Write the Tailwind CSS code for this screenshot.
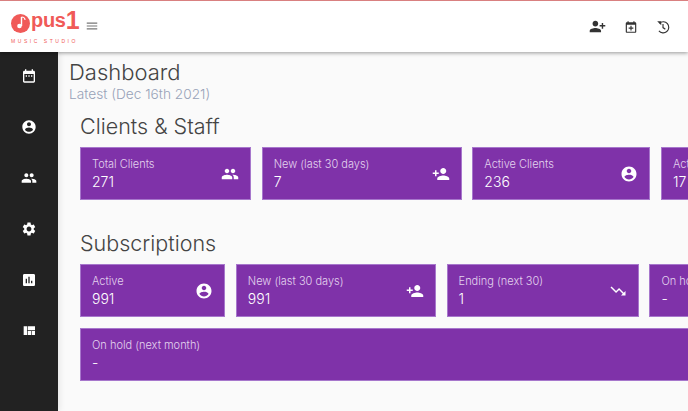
<!DOCTYPE html>
<html lang="en">
<head>
  <meta charset="UTF-8" />
  <title>Opus1 Dashboard</title>
  <script src="https://cdn.jsdelivr.net/npm/@tailwindcss/browser@4"></script>
</head>
<body class="h-[411px] w-[688px] overflow-hidden bg-[#fafafa] font-['Inter',sans-serif] text-[#444]">
  <!-- Header -->
  <header class="relative z-10 flex h-[52px] items-center border-t border-[#d98080] bg-white pl-[11px] pr-[18px] shadow-[0_1px_4px_rgba(0,0,0,0.4)]">
    <!-- logo -->
    <div class="-mt-[4px] flex w-[65px] flex-col text-[#f05a58]">
      <div class="flex h-[24px] items-end">
        <svg class="mb-[-4px] h-[21px] w-[20px] shrink-0" viewBox="0 0 20 21">
          <circle cx="9.5" cy="10.5" r="9.5" fill="#f05a58" />
          <path d="M10.5 4v9" stroke="#fff" stroke-width="1.4" fill="none" />
          <path d="M10.5 4c2.5 0 3.5 1 3.5 3" stroke="#fff" stroke-width="1.1" fill="none" />
          <circle cx="8.5" cy="13" r="2.3" fill="#fff" />
        </svg>
        <span class="font-['Liberation_Sans',sans-serif] text-[20px] leading-[19px] font-bold tracking-[-0.3px]">pus</span>
        <span class="font-['Liberation_Sans',sans-serif] text-[25px] leading-[19px] font-bold">1</span>
      </div>
      <span class="mt-[8px] font-['Liberation_Sans',sans-serif] text-[5px] leading-[6px] tracking-[2.55px] whitespace-nowrap">MUSIC STUDIO</span>
    </div>
    <svg class="mt-[-2px] ml-[9px] h-[14px] w-[14px]" viewBox="0 0 24 24" fill="#777"><path d="M3 18h18v-2H3v2zm0-5h18v-2H3v2zm0-7v2h18V6H3z" /></svg>
    <div class="ml-auto flex items-center gap-[18px]">
      <svg class="h-[17px] w-[17px]" viewBox="0 0 24 24" fill="#333"><path d="M15 12c2.21 0 4-1.79 4-4s-1.79-4-4-4-4 1.79-4 4 1.79 4 4 4zm-9-2V7H4v3H1v2h3v3h2v-3h3v-2H6zm9 4c-2.67 0-8 1.34-8 4v2h16v-2c0-2.66-5.33-4-8-4z" transform="matrix(-1 0 0 1 24 0)" /></svg>
      <svg class="h-[14px] w-[14px]" viewBox="0 0 24 24" fill="#333"><path d="M19 4h-1V2h-2v2H8V2H6v2H5c-1.1 0-2 .9-2 2v14c0 1.1.9 2 2 2h14c1.1 0 2-.9 2-2V6c0-1.1-.9-2-2-2zm0 16H5V8h14v12zm-8-2h2v-3h3v-2h-3v-3h-2v3H8v2h3v3z" /></svg>
      <svg class="h-[14px] w-[14px]" viewBox="0 0 24 24" fill="none" stroke="#333" stroke-width="2"><path d="M6 5.5A9.5 9.5 0 1 1 5 18.5" /><path d="M2 2h7v7z" fill="#333" stroke="none" /><path d="M12 7v6l4 3" /></svg>
    </div>
  </header>

  <div class="flex h-[359px]">
    <!-- Sidebar -->
    <nav class="flex w-[58px] shrink-0 flex-col items-center gap-[35px] bg-[#222] pt-[16px] text-white shadow-[2px_0_6px_rgba(0,0,0,0.08)]">
      <svg class="h-[16px] w-[16px]" viewBox="0 0 24 24" fill="currentColor"><path d="M9 11H7v2h2v-2zm4 0h-2v2h2v-2zm4 0h-2v2h2v-2zm2-7h-1V2h-2v2H8V2H6v2H5c-1.11 0-1.99.9-1.99 2L3 20c0 1.1.89 2 2 2h14c1.1 0 2-.9 2-2V6c0-1.1-.9-2-2-2zm0 16H5V9h14v11z" /></svg>
      <svg class="h-[16px] w-[16px]" viewBox="0 0 24 24" fill="currentColor"><path d="M12 2C6.48 2 2 6.48 2 12s4.48 10 10 10 10-4.48 10-10S17.52 2 12 2zm0 3c1.66 0 3 1.34 3 3s-1.34 3-3 3-3-1.34-3-3 1.34-3 3-3zm0 14.2c-2.5 0-4.71-1.28-6-3.22.03-1.99 4-3.08 6-3.08 1.99 0 5.97 1.09 6 3.08-1.29 1.94-3.5 3.22-6 3.22z" /></svg>
      <svg class="h-[16px] w-[16px]" viewBox="0 0 24 24" fill="currentColor"><path d="M16 11c1.66 0 2.99-1.34 2.99-3S17.66 5 16 5c-1.66 0-3 1.34-3 3s1.34 3 3 3zm-8 0c1.66 0 2.99-1.34 2.99-3S9.66 5 8 5C6.34 5 5 6.34 5 8s1.34 3 3 3zm0 2c-2.33 0-7 1.17-7 3.5V19h14v-2.5c0-2.33-4.67-3.5-7-3.5zm8 0c-.29 0-.62.02-.97.05 1.16.84 1.97 1.97 1.97 3.45V19h6v-2.5c0-2.33-4.67-3.5-7-3.5z" /></svg>
      <svg class="h-[16px] w-[16px]" viewBox="0 0 24 24" fill="currentColor"><path d="M19.14 12.94c.04-.3.06-.61.06-.94 0-.32-.02-.64-.07-.94l2.03-1.58c.18-.14.23-.41.12-.61l-1.92-3.32c-.12-.22-.37-.29-.59-.22l-2.39.96c-.5-.38-1.03-.7-1.62-.94l-.36-2.54c-.04-.24-.24-.41-.48-.41h-3.84c-.24 0-.43.17-.47.41l-.36 2.54c-.59.24-1.13.57-1.62.94l-2.39-.96c-.22-.08-.47 0-.59.22L2.74 8.87c-.12.21-.08.47.12.61l2.03 1.58c-.05.3-.09.63-.09.94s.02.64.07.94l-2.03 1.58c-.18.14-.23.41-.12.61l1.92 3.32c.12.22.37.29.59.22l2.39-.96c.5.38 1.03.7 1.62.94l.36 2.54c.05.24.24.41.48.41h3.84c.24 0 .44-.17.47-.41l.36-2.54c.59-.24 1.13-.56 1.62-.94l2.39.96c.22.08.47 0 .59-.22l1.92-3.32c.12-.22.07-.47-.12-.61l-2.01-1.58zM12 15.6c-1.98 0-3.6-1.62-3.6-3.6s1.62-3.6 3.6-3.6 3.6 1.62 3.6 3.6-1.62 3.6-3.6 3.6z" /></svg>
      <svg class="h-[16px] w-[16px]" viewBox="0 0 24 24" fill="currentColor"><path d="M19 3H5c-1.1 0-2 .9-2 2v14c0 1.1.9 2 2 2h14c1.1 0 2-.9 2-2V5c0-1.1-.9-2-2-2zM9 17H7v-7h2v7zm4 0h-2V7h2v10zm4 0h-2v-4h2v4z" /></svg>
      <svg class="h-[16px] w-[16px]" viewBox="0 0 24 24" fill="currentColor"><path d="M10 18h5v-6h-5v6zm-6 0h5V5H4v13zm12 0h5v-6h-5v6zM10 5v6h11V5H10z" /></svg>
    </nav>

    <!-- Main -->
    <main class="min-w-0 flex-1 overflow-hidden pt-[8px] pl-[11px]">
      <h1 class="text-[22px] leading-[25px] font-light text-[#444]">Dashboard</h1>
      <p class="text-[13.7px] leading-[18px] font-light text-[#98a2b8]">Latest (Dec 16th 2021)</p>

      <section class="pl-[11px]">
        <h2 class="mt-[8px] text-[21.5px] leading-[30px] font-light text-[#444]">Clients &amp; Staff</h2>
        <div class="mt-[6px] flex gap-[10.67px]">
          <div class="flex h-[53px] w-[171px] shrink-0 items-center justify-between border border-[#a777cc] bg-[#7f32a9] px-[11px] text-white">
            <div><p class="text-[11px] leading-[16px] font-light text-[#e3d3ee]">Total Clients</p><p class="mt-[1px] text-[14px] leading-[18px] font-light">271</p></div>
            <svg class="h-[18px] w-[18px]" viewBox="0 0 24 24" fill="currentColor"><path d="M16 11c1.66 0 2.99-1.34 2.99-3S17.66 5 16 5c-1.66 0-3 1.34-3 3s1.34 3 3 3zm-8 0c1.66 0 2.99-1.34 2.99-3S9.66 5 8 5C6.34 5 5 6.34 5 8s1.34 3 3 3zm0 2c-2.33 0-7 1.17-7 3.5V19h14v-2.5c0-2.33-4.67-3.5-7-3.5zm8 0c-.29 0-.62.02-.97.05 1.16.84 1.97 1.97 1.97 3.45V19h6v-2.5c0-2.33-4.67-3.5-7-3.5z" /></svg>
          </div>
          <div class="flex h-[53px] w-[200px] shrink-0 items-center justify-between border border-[#a777cc] bg-[#7f32a9] px-[11px] text-white">
            <div><p class="text-[11px] leading-[16px] font-light text-[#e3d3ee]">New (last 30 days)</p><p class="mt-[1px] text-[14px] leading-[18px] font-light">7</p></div>
            <svg class="h-[18px] w-[18px]" viewBox="0 0 24 24" fill="currentColor"><path d="M15 12c2.21 0 4-1.79 4-4s-1.79-4-4-4-4 1.79-4 4 1.79 4 4 4zm-9-2V7H4v3H1v2h3v3h2v-3h3v-2H6zm9 4c-2.67 0-8 1.34-8 4v2h16v-2c0-2.66-5.33-4-8-4z" /></svg>
          </div>
          <div class="flex h-[53px] w-[178px] shrink-0 items-center justify-between border border-[#a777cc] bg-[#7f32a9] px-[11px] text-white">
            <div><p class="text-[11px] leading-[16px] font-light text-[#e3d3ee]">Active Clients</p><p class="mt-[1px] text-[14px] leading-[18px] font-light">236</p></div>
            <svg class="h-[18px] w-[18px]" viewBox="0 0 24 24" fill="currentColor"><path d="M12 2C6.48 2 2 6.48 2 12s4.48 10 10 10 10-4.48 10-10S17.52 2 12 2zm0 3c1.66 0 3 1.34 3 3s-1.34 3-3 3-3-1.34-3-3 1.34-3 3-3zm0 14.2c-2.5 0-4.71-1.28-6-3.22.03-1.99 4-3.08 6-3.08 1.99 0 5.97 1.09 6 3.08-1.29 1.94-3.5 3.22-6 3.22z" /></svg>
          </div>
          <div class="flex h-[53px] w-[178px] shrink-0 items-center justify-between border border-[#a777cc] bg-[#7f32a9] px-[11px] text-white">
            <div><p class="text-[11px] leading-[16px] font-light text-[#e3d3ee]">Active Staff</p><p class="mt-[1px] text-[14px] leading-[18px] font-light">17</p></div>
          </div>
        </div>
      </section>

      <section class="pl-[11px]">
        <h2 class="mt-[28px] text-[21.5px] leading-[30px] font-light text-[#444]">Subscriptions</h2>
        <div class="mt-[6px] flex gap-[10.8px]">
          <div class="flex h-[53px] w-[145px] shrink-0 items-center justify-between border border-[#a777cc] bg-[#7f32a9] px-[11px] text-white">
            <div><p class="text-[11px] leading-[16px] font-light text-[#e3d3ee]">Active</p><p class="mt-[1px] text-[14px] leading-[18px] font-light">991</p></div>
            <svg class="h-[18px] w-[18px]" viewBox="0 0 24 24" fill="currentColor"><path d="M12 2C6.48 2 2 6.48 2 12s4.48 10 10 10 10-4.48 10-10S17.52 2 12 2zm0 3c1.66 0 3 1.34 3 3s-1.34 3-3 3-3-1.34-3-3 1.34-3 3-3zm0 14.2c-2.5 0-4.71-1.28-6-3.22.03-1.99 4-3.08 6-3.08 1.99 0 5.97 1.09 6 3.08-1.29 1.94-3.5 3.22-6 3.22z" /></svg>
          </div>
          <div class="flex h-[53px] w-[200px] shrink-0 items-center justify-between border border-[#a777cc] bg-[#7f32a9] px-[11px] text-white">
            <div><p class="text-[11px] leading-[16px] font-light text-[#e3d3ee]">New (last 30 days)</p><p class="mt-[1px] text-[14px] leading-[18px] font-light">991</p></div>
            <svg class="h-[18px] w-[18px]" viewBox="0 0 24 24" fill="currentColor"><path d="M15 12c2.21 0 4-1.79 4-4s-1.79-4-4-4-4 1.79-4 4 1.79 4 4 4zm-9-2V7H4v3H1v2h3v3h2v-3h3v-2H6zm9 4c-2.67 0-8 1.34-8 4v2h16v-2c0-2.66-5.33-4-8-4z" /></svg>
          </div>
          <div class="flex h-[53px] w-[192px] shrink-0 items-center justify-between border border-[#a777cc] bg-[#7f32a9] px-[11px] text-white">
            <div><p class="text-[11px] leading-[16px] font-light text-[#e3d3ee]">Ending (next 30)</p><p class="mt-[1px] text-[14px] leading-[18px] font-light">1</p></div>
            <svg class="h-[18px] w-[18px]" viewBox="0 0 24 24" fill="currentColor"><path d="M16 18l2.29-2.29-4.88-4.88-4 4L2 7.41 3.41 6l6 6 4-4 6.3 6.29L22 12v6z" /></svg>
          </div>
          <div class="flex h-[53px] w-[178px] shrink-0 items-center justify-between border border-[#a777cc] bg-[#7f32a9] px-[11px] text-white">
            <div><p class="text-[11px] leading-[16px] font-light whitespace-nowrap text-[#e3d3ee]">On hold (this month)</p><p class="mt-[1px] text-[14px] leading-[18px] font-light">-</p></div>
          </div>
        </div>
        <div class="mt-[11px] flex h-[53px] w-[640px] items-center border border-[#a777cc] bg-[#7f32a9] px-[11px] text-white">
          <div><p class="text-[11px] leading-[16px] font-light text-[#e3d3ee]">On hold (next month)</p><p class="mt-[1px] text-[14px] leading-[18px] font-light">-</p></div>
        </div>
      </section>
    </main>
  </div>
</body>
</html>
